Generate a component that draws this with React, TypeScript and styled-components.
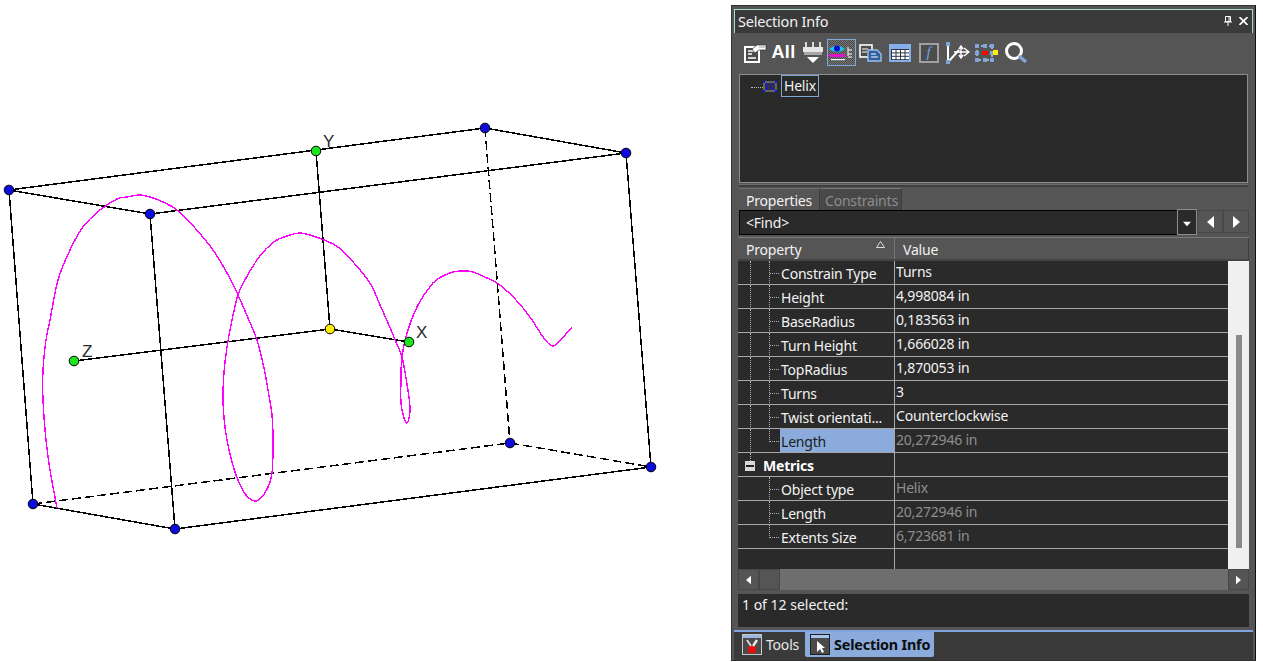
import React from "react";
import styled, { createGlobalStyle } from "styled-components";

const GlobalStyle = createGlobalStyle`
  html, body { margin: 0; padding: 0; background: #fff; overflow: hidden; }
  * { box-sizing: border-box; }
`;

const UI_FONT = `"Noto Sans", "Open Sans", "Liberation Sans", sans-serif`;

// ---- drawing data for the viewport ----
type Pt = [number, number];

const HELIX: Pt[] = [
  [57, 508], [50, 470], [46, 440], [43, 400], [43, 370], [46, 340], [50, 320], [58, 280], [70, 250], [83, 227],
  [100, 210], [117, 199], [127, 197], [140, 195], [150, 197], [163, 202], [177, 210], [195, 228], [213, 250],
  [227, 273], [238, 295], [248, 318], [257, 340], [264, 368], [268, 390], [272, 415], [273, 440], [272, 473],
  [266, 491], [256, 501], [246, 495], [238, 480], [232, 462], [227, 440], [224, 418], [223, 397], [224, 372],
  [227, 347], [232, 320], [238, 295], [246, 278], [257, 260], [266, 249], [277, 240], [290, 235], [300, 233],
  [310, 235], [324, 240], [338, 247], [354, 263], [370, 283], [380, 305], [388, 323], [396, 342], [402, 357],
  [407, 384], [410, 407], [409, 418], [407, 423], [404, 418], [401, 403], [401, 378], [402, 357], [407, 333],
  [418, 305], [433, 283], [443, 276], [453, 272], [463, 271], [473, 272], [487, 278], [500, 285], [516, 300],
  [530, 317], [541, 334], [548, 343], [553, 346], [559, 342], [566, 334], [572, 327],
];

const smooth = (p: Pt[]) => {
  let d = `M${p[0][0]} ${p[0][1]}`;
  for (let i = 0; i < p.length - 1; i++) {
    const a = p[Math.max(i - 1, 0)];
    const b = p[i];
    const c = p[i + 1];
    const e = p[Math.min(i + 2, p.length - 1)];
    d += ` C${b[0] + (c[0] - a[0]) / 6} ${b[1] + (c[1] - a[1]) / 6} ${c[0] - (e[0] - b[0]) / 6} ${c[1] - (e[1] - b[1]) / 6} ${c[0]} ${c[1]}`;
  }
  return d;
};

const SOLID: [Pt, Pt][] = [
  [[9, 190], [485, 128]], [[485, 128], [626, 153]], [[9, 190], [150, 214]], [[150, 214], [626, 153]],
  [[9, 190], [33, 504]], [[150, 214], [175, 529]], [[626, 153], [651, 467]], [[33, 504], [175, 529]],
  [[175, 529], [651, 467]], [[316, 151], [330, 329]], [[74, 361], [330, 329]], [[330, 329], [409, 342]],
];
const DASHED: [Pt, Pt][] = [
  [[33, 504], [510, 443]], [[510, 443], [651, 467]], [[485, 128], [510, 443]],
];
const NODES: { at: Pt; fill: string }[] = [
  { at: [9, 190], fill: "#0c0ce0" }, { at: [150, 214], fill: "#0c0ce0" }, { at: [485, 128], fill: "#0c0ce0" },
  { at: [626, 153], fill: "#0c0ce0" }, { at: [33, 504], fill: "#0c0ce0" }, { at: [175, 529], fill: "#0c0ce0" },
  { at: [510, 443], fill: "#0c0ce0" }, { at: [651, 467], fill: "#0c0ce0" },
  { at: [316, 151], fill: "#1ee61e" }, { at: [74, 361], fill: "#1ee61e" }, { at: [409, 342], fill: "#1ee61e" },
  { at: [330, 329], fill: "#ffee00" },
];

// ---- property rows ----
type Rail = "full" | "half" | "none";
interface IRow {
  name: string;
  value: string;
  dim?: boolean;
  selected?: boolean;
  outer: Rail;
  inner: Rail;
}

const ROWS: IRow[] = [
  { name: "Constrain Type", value: "Turns", outer: "full", inner: "full" },
  { name: "Height", value: "4,998084 in", outer: "full", inner: "full" },
  { name: "BaseRadius", value: "0,183563 in", outer: "full", inner: "full" },
  { name: "Turn Height", value: "1,666028 in", outer: "full", inner: "full" },
  { name: "TopRadius", value: "1,870053 in", outer: "full", inner: "full" },
  { name: "Turns", value: "3", outer: "full", inner: "full" },
  { name: "Twist orientati...", value: "Counterclockwise", outer: "full", inner: "full" },
  { name: "Length", value: "20,272946 in", dim: true, selected: true, outer: "full", inner: "half" },
];
const METRICS: IRow[] = [
  { name: "Object type", value: "Helix", dim: true, outer: "none", inner: "full" },
  { name: "Length", value: "20,272946 in", dim: true, outer: "none", inner: "full" },
  { name: "Extents Size", value: "6,723681 in", dim: true, outer: "none", inner: "half" },
];

// ---- layout ----
const Page = styled.div`
  display: flex;
  width: 1263px;
  height: 662px;
  background: #fff;
  font-family: ${UI_FONT};
`;

const Viewport = styled.div`
  flex: 0 0 731px;
  height: 662px;
  svg { display: block; }
`;

const AxisLabel = styled.text`
  font-family: "Liberation Sans", sans-serif;
  font-size: 17px;
  fill: #2a2a2a;
`;

const Panel = styled.div`
  flex: 0 0 525px;
  height: 656px;
  margin-top: 5px;
  padding: 3px 2px 0;
  display: flex;
  flex-direction: column;
  background: #555;
  border: 1px solid #333;
  border-right-color: #111;
  font-size: 14px;
  letter-spacing: -0.2px;
  color: #f2f2f2;
`;

const TitleBar = styled.div`
  flex: 0 0 24px;
  display: flex;
  align-items: center;
  padding: 0 4px 2px 3px;
  background: #3a3a3a;
  border: 1px solid #a5dccb;
  border-bottom: 0;
  font-size: 14.5px;
`;

const TitleText = styled.span`
  flex: 1;
`;

const TitleIcon = styled.svg`
  display: block;
  margin-left: 7px;
`;

const Body = styled.div`
  flex: 1;
  min-height: 0;
  display: flex;
  flex-direction: column;
  padding: 0 4px;
`;

const Toolbar = styled.div`
  flex: 0 0 41px;
  display: flex;
  align-items: flex-start;
  padding: 6px 0 0 2px;
`;

const ToolButton = styled.div<{ $active?: boolean }>`
  width: 29px;
  height: 27px;
  display: flex;
  align-items: center;
  justify-content: center;
  border: 1px solid ${(p) => (p.$active ? "#84a8dc" : "transparent")};
  ${(p) => p.$active && `
    background: repeating-conic-gradient(#767676 0 25%, #4a4a4a 0 50%) 0 0 / 2px 2px;
  `}
`;

const AllLabel = styled.span`
  font-family: "Liberation Sans", sans-serif;
  font-weight: 700;
  font-size: 18px;
  letter-spacing: 0.4px;
  color: #fff;
`;

const TreeBox = styled.div`
  flex: 0 0 109px;
  margin: 0 1px;
  padding: 0 0 0 11px;
  display: flex;
  align-items: flex-start;
  background: #2a2a2a;
  border: 1px solid #8c8c8c;
`;

const TreeDots = styled.span`
  width: 12px;
  margin-top: 12px;
  border-top: 1px dotted #bbb;
`;

const TreeIcon = styled.svg`
  display: block;
  margin: 5px 4px 0 0;
`;

const TreeLabel = styled.span`
  height: 22px;
  padding: 0 2px;
  line-height: 20px;
  border: 1px solid #7ea6d8;
`;

const Splitter = styled.div`
  flex: 0 0 5px;
  margin: 0 1px;
  padding-top: 1px;
  &::before {
    content: "";
    display: block;
    height: 2px;
    background: #3f3f3f;
    border-top: 1px solid #6c6c6c;
  }
`;

const TabRow = styled.div`
  flex: 0 0 22px;
  display: flex;
  margin-left: 1px;
`;

const PropTab = styled.div<{ $active?: boolean }>`
  width: ${(p) => (p.$active ? 81 : 82)}px;
  padding-left: ${(p) => (p.$active ? 7 : 5)}px;
  line-height: 24px;
  height: 22px;
  overflow: hidden;
  border-top: 1px solid ${(p) => (p.$active ? "#6f6f6f" : "#7a7a7a")};
  border-right: 1px solid #3c3c3c;
  border-radius: 2px 2px 0 0;
  background: ${(p) => (p.$active ? "#555" : "#484848")};
  color: ${(p) => (p.$active ? "#f2f2f2" : "#8e8e8e")};
`;

const FindRow = styled.div`
  flex: 0 0 25px;
  display: flex;
  align-items: flex-start;
  margin-left: 1px;
`;

const FindInput = styled.div`
  flex: 1;
  height: 25px;
  padding-left: 6px;
  line-height: 24px;
  background: #2a2a2a;
  border-top: 1px solid #000;
  border-bottom: 1px solid #000;
  border-left: 1px solid #000;
`;

const DropButton = styled.div`
  width: 20px;
  height: 26px;
  margin-top: -1px;
  padding-top: 3px;
  display: flex;
  align-items: center;
  justify-content: center;
  background: #2a2a2a;
  border: 1px solid #8c8c8c;
`;

const NavButton = styled.div`
  width: 26px;
  height: 23px;
  display: flex;
  align-items: center;
  justify-content: center;
  background: #555;
  border: 1px solid #484848;
`;

const GridHeader = styled.div`
  flex: 0 0 24px;
  height: 24px;
  overflow: hidden;
  margin-top: 2px;
  display: flex;
  background: #555;
  border-top: 1px solid #7a7a7a;
  border-bottom: 2px solid #444;
`;

const HeaderCell = styled.div<{ $first?: boolean }>`
  position: relative;
  width: ${(p) => (p.$first ? "157px" : "auto")};
  flex: ${(p) => (p.$first ? "none" : "1")};
  padding-left: 8px;
  line-height: 23px;
  border-right: 1px solid ${(p) => (p.$first ? "#777" : "#3e3e3e")};
`;

const SortMark = styled.svg`
  position: absolute;
  right: 9px;
  top: 3px;
`;

const GridBody = styled.div`
  flex: 0 0 308px;
  height: 308px;
  display: flex;
`;

const Rows = styled.div`
  flex: 1;
  display: flex;
  flex-direction: column;
  background: #2a2a2a;
`;

const Row = styled.div`
  flex: 0 0 24px;
  height: 24px;
  overflow: hidden;
  display: flex;
  border-bottom: 1px solid #a8a8a8;
`;

const FillerRow = styled.div`
  flex: 1;
  min-height: 0;
  display: flex;
`;

const NameCell = styled.div`
  position: relative;
  width: 157px;
  display: flex;
  border-right: 1px solid #a8a8a8;
`;

const RailLine = styled.span<{ $x: number; $half?: boolean; $short?: boolean }>`
  position: absolute;
  left: ${(p) => p.$x}px;
  top: 0;
  height: ${(p) => (p.$short ? "8px" : p.$half ? "13px" : "24px")};
  border-left: 1px dotted #b4b4b4;
`;

const Elbow = styled.span`
  position: absolute;
  left: 32px;
  top: 12px;
  width: 9px;
  border-top: 1px dotted #b4b4b4;
`;

const NameLabel = styled.span<{ $selected?: boolean }>`
  margin-left: 42px;
  flex: 1;
  padding: 2px 0 0 1px;
  line-height: 21px;
  white-space: nowrap;
  overflow: hidden;
  background: ${(p) => (p.$selected ? "#8aabdb" : "transparent")};
  color: ${(p) => (p.$selected ? "#1c1c1c" : "#f2f2f2")};
`;

const GroupLabel = styled.span`
  margin-left: 25px;
  padding-top: 2px;
  line-height: 21px;
  font-weight: 700;
  color: #fff;
`;

const Expander = styled.span`
  position: absolute;
  left: 7px;
  top: 8px;
  width: 10px;
  height: 10px;
  display: flex;
  align-items: center;
  justify-content: center;
  background: #d8d8d8;
  &::before {
    content: "";
    width: 8px;
    height: 2px;
    background: #222;
  }
`;

const ValueCell = styled.div<{ $dim?: boolean }>`
  flex: 1;
  padding-left: 1px;
  line-height: 21px;
  white-space: nowrap;
  color: ${(p) => (p.$dim ? "#8e8e8e" : "#f2f2f2")};
`;

const VScroll = styled.div`
  flex: 0 0 21px;
  padding: 74px 7px 21px 8px;
  background: #f0f0f0;
  &::before {
    content: "";
    display: block;
    height: 100%;
    background: #8a8a8a;
  }
`;

const HScroll = styled.div`
  flex: 0 0 21px;
  display: flex;
  background: #6e6e6e;
`;

const ScrollButton = styled.div`
  flex: 0 0 21px;
  display: flex;
  align-items: center;
  justify-content: center;
  background: #555;
  border: 1px solid #474747;
`;

const HThumb = styled.div`
  flex: 0 0 21px;
  background: #555;
  border: 1px solid #474747;
`;

const HTrack = styled.div`
  flex: 1;
`;

const StatusBox = styled.div`
  flex: 0 0 33px;
  margin-top: 4px;
  padding-left: 4px;
  line-height: 22px;
  letter-spacing: 0;
  background: #2a2a2a;
`;

const DockBar = styled.div`
  flex: 0 0 30px;
  margin-top: 3px;
  display: flex;
  align-items: flex-start;
  padding-left: 3px;
  background: #3a3a3a;
  border-top: 2px solid #7ea6dc;
`;

const DockTab = styled.div<{ $active?: boolean }>`
  height: 25px;
  display: flex;
  align-items: center;
  gap: 4px;
  margin-left: ${(p) => (p.$active ? "2px" : "0")};
  padding: 0 4px 0 5px;
  border-radius: 0 0 2px 2px;
  background: ${(p) => (p.$active ? "#8aabdb" : "transparent")};
  color: ${(p) => (p.$active ? "#0c0c0c" : "#e8e8e8")};
  font-weight: ${(p) => (p.$active ? 700 : 400)};
  font-size: ${(p) => (p.$active ? "14.4px" : "14px")};
`;

// ---- icons ----
const Arrow = ({ dir, size = 7 }: { dir: "left" | "right" | "down"; size?: number }) => {
  const pts = dir === "left" ? "7,0 7,12 0,6" : dir === "right" ? "0,0 0,12 7,6" : "0,0 12,0 6,7";
  const w = dir === "down" ? 12 : 7;
  const h = dir === "down" ? 7 : 12;
  return (
    <svg width={dir === "down" ? size + 1 : size} height={dir === "down" ? size - 1 : size + 5} viewBox={`0 0 ${w} ${h}`}>
      <polygon points={pts} fill="#fff" />
    </svg>
  );
};

const PropsIcon = () => (
  <svg width="23" height="20" viewBox="0 0 23 20" style={{ marginLeft: 2 }}>
    <rect x="1" y="4" width="14" height="15" fill="#4c4c4c" stroke="#fff" strokeWidth="2" />
    <path d="M4 8h7M4 11h4M4 15h8" stroke="#fff" strokeWidth="1.4" />
    <path d="M8 6 L13 2 H22 V7 H15 L11 10 Z" fill="#fff" stroke="#333" strokeWidth=".7" />
    <path d="M15 4h6" stroke="#888" strokeWidth=".8" />
  </svg>
);

const PlugIcon = () => (
  <svg width="20" height="22" viewBox="0 0 20 22">
    <path d="M3 0v5M10 0v5M17 0v5" stroke="#e8e8e8" strokeWidth="1.8" />
    <rect x="0" y="5" width="20" height="5" fill="#e6e6e6" />
    <rect x="1" y="10" width="18" height="3" fill="#a8a8a8" />
    <polygon points="4,15 16,15 10,21" fill="#fff" />
  </svg>
);

const EyeIcon = () => (
  <svg width="25" height="17" viewBox="0 0 25 17">
    <path d="M0 5 Q8 -2 16 5 Q8 11 0 5Z" fill="#18c8ee" />
    <circle cx="8" cy="4.5" r="3" fill="#0808c8" />
    <rect x="0" y="10" width="16" height="3" fill="#e010d0" />
    <rect x="2" y="15" width="14" height="1.2" fill="#fff" />
    <path d="M19 3v9M19 6h4M19 10h4M19 13h4" stroke="#fff" fill="none" />
  </svg>
);

const PagesIcon = () => (
  <svg width="23" height="18" viewBox="0 0 23 18">
    <rect x="1" y="1" width="12" height="12" fill="#4c4c4c" stroke="#fff" strokeWidth="1.6" />
    <path d="M3 5h6M3 8h5" stroke="#fff" />
    <path d="M9 6h9l4 4v7H9Z" fill="#2f5f9c" stroke="#9cc0f0" strokeWidth="1.4" />
    <path d="M12 10h5M12 13h7" stroke="#fff" />
  </svg>
);

const TableIcon = () => (
  <svg width="22" height="18" viewBox="0 0 22 18">
    <rect width="22" height="18" fill="#86aee8" />
    <rect x="2" y="5" width="18" height="11" fill="#2c3444" />
    {[6, 9.4, 12.8].map((y) =>
      [3, 7.5, 12, 16.5].map((x) => <rect key={`${x}-${y}`} x={x} y={y} width="3.5" height="2.4" fill="#fff" />)
    )}
  </svg>
);

const FuncBox = styled.div`
  width: 20px;
  height: 20px;
  display: flex;
  align-items: center;
  justify-content: center;
  background: #4c4c4c;
  border: 2px solid #a0a0a0;
  font-family: "Liberation Serif", serif;
  font-style: italic;
  font-size: 15px;
  color: #6f9fe6;
`;

const NodeArrowIcon = () => (
  <svg width="24" height="22" viewBox="0 0 24 22">
    <path d="M2 2v18" stroke="#fff" strokeWidth="2" />
    <path d="M3 19 L13 8" stroke="#fff" strokeWidth="2" />
    <path d="M8 10h15M18 6l5 4-5 4M15 5v10M13 7l2-3 2 3M13 13l2 3 2-3" stroke="#fff" strokeWidth="1.4" fill="none" />
    <rect x="0" y="0" width="4" height="4" fill="#7ea6dc" />
    <rect x="0" y="18" width="4" height="4" fill="#7ea6dc" />
  </svg>
);

const BoxNodesIcon = () => (
  <svg width="24" height="20" viewBox="0 0 24 20">
    <rect x="2" y="3" width="15" height="14" fill="none" stroke="#fff" strokeDasharray="2 2" />
    {[[0, 1], [8, 1], [15, 1], [0, 8], [15, 8], [0, 15], [8, 15], [15, 15]].map(([x, y]) => (
      <rect key={`${x}-${y}`} x={x} y={y} width="4" height="4" fill="#7ea6dc" />
    ))}
    <rect x="7" y="8" width="6" height="4" fill="#ff0000" />
    <rect x="18" y="7" width="5" height="5" fill="#fff000" />
  </svg>
);

const LensIcon = () => (
  <svg width="24" height="22" viewBox="0 0 24 22">
    <circle cx="10" cy="9" r="7.5" fill="none" stroke="#fff" strokeWidth="3" />
    <path d="M15 14 L22 20" stroke="#7ea6dc" strokeWidth="3.4" />
  </svg>
);

const TreeShapeIcon = () => (
  <TreeIcon width="14" height="13" viewBox="0 0 14 13">
    <rect x="1" y="2" width="12" height="9" fill="#333" stroke="#999" />
    <path d="M4 4v5M3 4h2M3 9h2M11 4H8v5h3" stroke="#1212ff" fill="none" />
    {[[0, 1], [12, 1], [0, 10], [12, 10]].map(([x, y]) => (
      <rect key={`${x}-${y}`} x={x} y={y} width="2" height="2" fill="#1212ff" />
    ))}
  </TreeIcon>
);

const ToolsTabIcon = () => (
  <svg width="20" height="21" viewBox="0 0 20 21">
    <rect x=".5" y=".5" width="19" height="20" fill="#4a4a4a" stroke="#c8c8c8" />
    <rect x="1" y="1" width="18" height="3" fill="#9db8e0" />
    <rect x="6" y="12" width="8" height="7" fill="#e01010" />
    <path d="M11 12 L15 6" stroke="#e8e8e8" strokeWidth="2.4" />
    <path d="M5 6 L9 12" stroke="#e8e8e8" strokeWidth="1.6" />
  </svg>
);

const CursorTabIcon = () => (
  <svg width="20" height="21" viewBox="0 0 20 21">
    <rect x=".5" y=".5" width="19" height="20" fill="#4a4a4a" stroke="#222" />
    <rect x="1" y="1" width="18" height="3" fill="#a9c4ea" />
    <polygon points="7,7 7,18 10,15 12,19 14,18 12,14 15,14" fill="#fff" />
  </svg>
);

const renderRails = (row: IRow) => (
  <>
    {row.outer !== "none" && <RailLine $x={12} />}
    {row.inner !== "none" && <RailLine $x={31} $half={row.inner === "half"} />}
    <Elbow />
  </>
);

const PropertyRow = ({ row }: { row: IRow }) => (
  <Row>
    <NameCell>
      {renderRails(row)}
      <NameLabel $selected={row.selected}>{row.name}</NameLabel>
    </NameCell>
    <ValueCell $dim={row.dim}>{row.value}</ValueCell>
  </Row>
);

export default function App() {
  return (
    <Page>
      <GlobalStyle />
      <Viewport>
        <svg width="731" height="662" viewBox="0 0 731 662">
          <g shapeRendering="crispEdges" fill="none">
            {SOLID.map(([a, b], i) => (
              <line key={i} x1={a[0]} y1={a[1]} x2={b[0]} y2={b[1]} stroke="#000" strokeWidth="1.5" />
            ))}
            {DASHED.map(([a, b], i) => (
              <line key={i} x1={a[0]} y1={a[1]} x2={b[0]} y2={b[1]} stroke="#000" strokeWidth="1.5" strokeDasharray="9 4" />
            ))}
            <path d={smooth(HELIX)} stroke="#ff00ff" strokeWidth="1.4" />
          </g>
          {NODES.map((n, i) => (
            <circle key={i} cx={n.at[0]} cy={n.at[1]} r="4.8" fill={n.fill} stroke="#000" />
          ))}
          <AxisLabel x="323" y="147">Y</AxisLabel>
          <AxisLabel x="82" y="357">Z</AxisLabel>
          <AxisLabel x="416" y="338">X</AxisLabel>
        </svg>
      </Viewport>

      <Panel>
        <TitleBar>
          <TitleText>Selection Info</TitleText>
          <TitleIcon width="8" height="10" viewBox="0 0 8 10">
            <path d="M1.5 .5h5v5h-5zM0 6h8M4 6v4M5 1v4" stroke="#fff" fill="none" />
          </TitleIcon>
          <TitleIcon width="9" height="8" viewBox="0 0 9 8">
            <path d="M.5 0 L8.5 8M8.5 0 L.5 8" stroke="#fff" strokeWidth="1.6" />
          </TitleIcon>
        </TitleBar>
        <Body>
          <Toolbar>
            <ToolButton><PropsIcon /></ToolButton>
            <ToolButton><AllLabel>All</AllLabel></ToolButton>
            <ToolButton><PlugIcon /></ToolButton>
            <ToolButton $active><EyeIcon /></ToolButton>
            <ToolButton><PagesIcon /></ToolButton>
            <ToolButton><TableIcon /></ToolButton>
            <ToolButton><FuncBox>f</FuncBox></ToolButton>
            <ToolButton><NodeArrowIcon /></ToolButton>
            <ToolButton><BoxNodesIcon /></ToolButton>
            <ToolButton><LensIcon /></ToolButton>
          </Toolbar>
          <TreeBox>
            <TreeDots />
            <TreeShapeIcon />
            <TreeLabel>Helix</TreeLabel>
          </TreeBox>
          <Splitter />
          <TabRow>
            <PropTab $active>Properties</PropTab>
            <PropTab>Constraints</PropTab>
          </TabRow>
          <FindRow>
            <FindInput>&lt;Find&gt;</FindInput>
            <DropButton><Arrow dir="down" /></DropButton>
            <NavButton><Arrow dir="left" /></NavButton>
            <NavButton><Arrow dir="right" /></NavButton>
          </FindRow>
          <GridHeader>
            <HeaderCell $first>
              Property
              <SortMark width="9" height="7" viewBox="0 0 9 7">
                <path d="M4.5 .5 L8.5 6.5 H.5 Z" fill="none" stroke="#ddd" />
              </SortMark>
            </HeaderCell>
            <HeaderCell>Value</HeaderCell>
          </GridHeader>
          <GridBody>
            <Rows>
              {ROWS.map((r) => (
                <PropertyRow key={r.name} row={r} />
              ))}
              <Row>
                <NameCell>
                  <RailLine $x={12} $short />
                  <Expander />
                  <GroupLabel>Metrics</GroupLabel>
                </NameCell>
                <ValueCell />
              </Row>
              {METRICS.map((r) => (
                <PropertyRow key={r.name} row={r} />
              ))}
              <FillerRow>
                <NameCell />
              </FillerRow>
            </Rows>
            <VScroll />
          </GridBody>
          <HScroll>
            <ScrollButton><Arrow dir="left" size={5} /></ScrollButton>
            <HThumb />
            <HTrack />
            <ScrollButton><Arrow dir="right" size={5} /></ScrollButton>
          </HScroll>
          <StatusBox>1 of 12 selected:</StatusBox>
        </Body>
        <DockBar>
          <DockTab>
            <ToolsTabIcon />
            Tools
          </DockTab>
          <DockTab $active>
            <CursorTabIcon />
            Selection Info
          </DockTab>
        </DockBar>
      </Panel>
    </Page>
  );
}
